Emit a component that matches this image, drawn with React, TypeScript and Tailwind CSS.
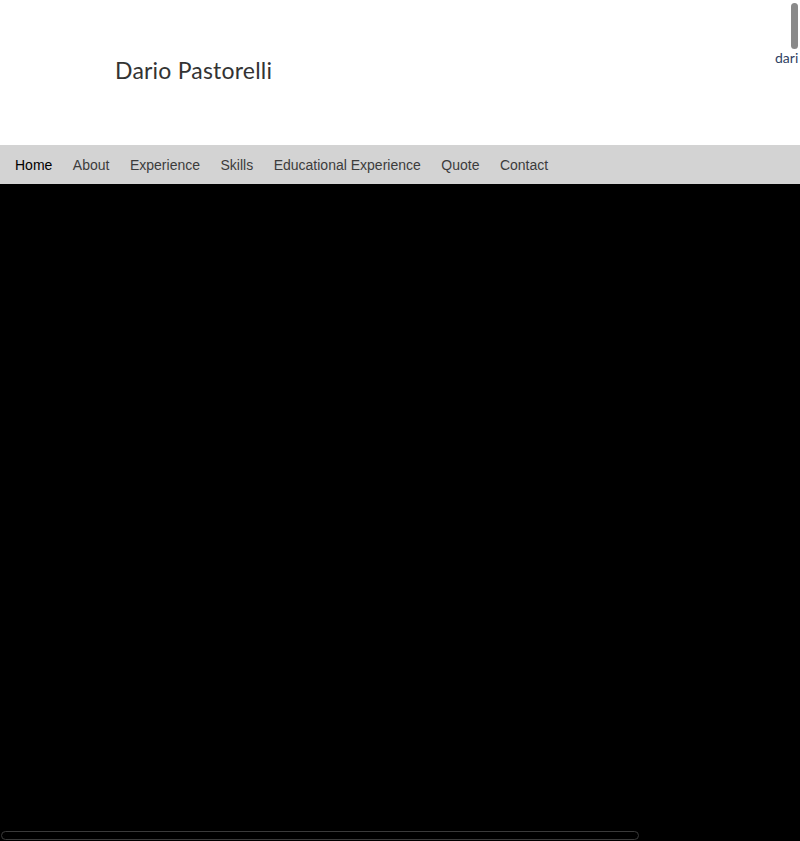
import React from "react";

const navItems = ["Home", "About", "Experience", "Skills", "Educational Experience", "Quote", "Contact"];

const App: React.FC = () => {
  return (
    <div className="relative w-[800px] h-[841px] overflow-hidden bg-black font-['Liberation_Sans',Arial,sans-serif]">
      <header className="relative h-[145px] bg-white overflow-hidden">
        <h1 className="pl-[115px] pt-[55px] text-[23px] leading-[30px] text-[#333] font-['Lato',sans-serif] tracking-[0.2px]">
          Dario Pastorelli
        </h1>
        <div className="absolute left-[791px] top-[3px] w-[7px] h-[46px] rounded-full bg-[#8a8a8a]" />
        <span className="absolute left-[775px] top-[47px] text-[14px] text-[#2f3f63] font-['Lato',sans-serif] whitespace-nowrap">
          dari
        </span>
      </header>
      <nav className="h-[39px] bg-[#d3d3d3] flex items-center pl-[15px] pt-[2px] gap-[20.5px] text-[14px]">
        {navItems.map((item, i) => (
          <span key={item} className={i === 0 ? "text-black" : "text-[#3c3c3c]"}>
            {item}
          </span>
        ))}
      </nav>
      <main className="h-[657px] bg-black" />
      <div className="absolute left-[1px] top-[831px] w-[638px] h-[9px] rounded-full border border-[#3a3a3a]" />
    </div>
  );
};

export default App;
